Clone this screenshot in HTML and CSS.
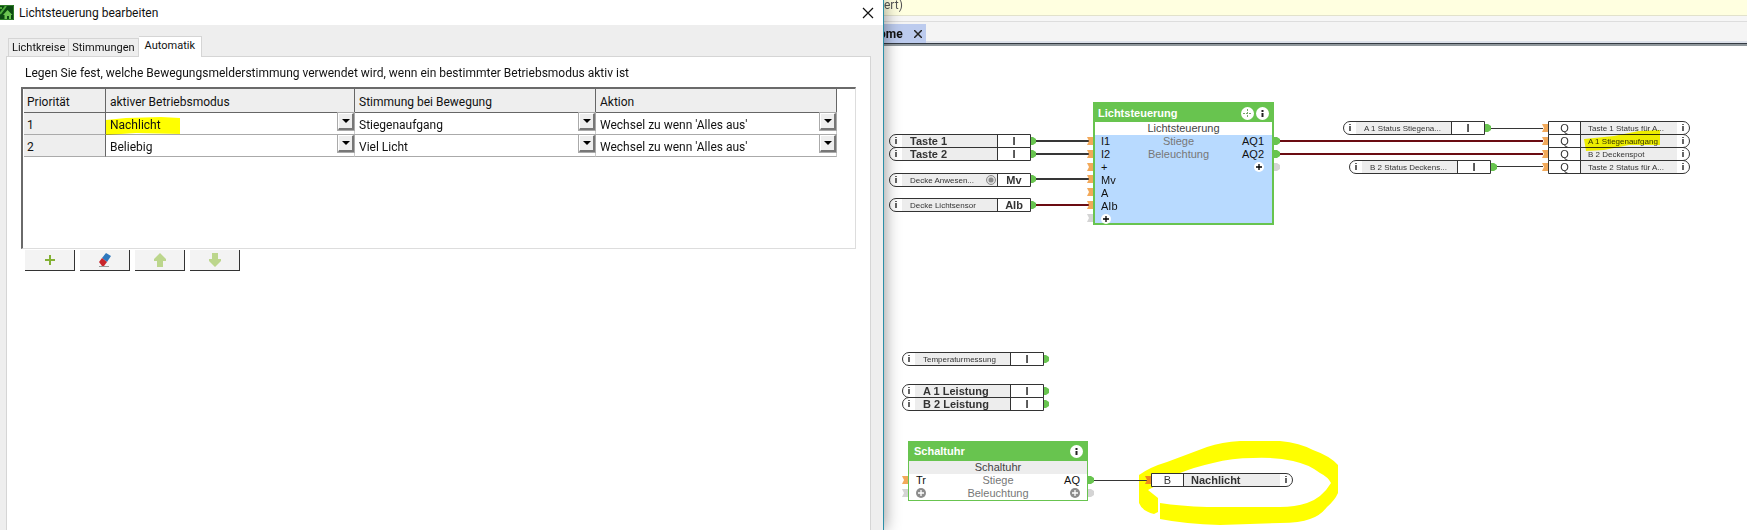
FILE: index.html
```html
<!doctype html>
<html lang="de">
<head>
	<meta charset="utf-8">
	<title>Lichtsteuerung bearbeiten</title>
	<link rel="stylesheet" href="styles.css">
</head>
<body>
<div id="desktop">

	<div id="dialog">
		<div class="titlebar">
			<svg class="appicon" width="14" height="15" viewBox="0 0 14 15">
				<rect width="14" height="15" fill="#0c4a12"/>
				<path d="M0 9L6 1M0 3h2" stroke="#4fae3c" stroke-width="2" fill="none"/>
				<path d="M3 10l4.500-5 5 5h-1.500v4H9v-3H7v3H4.500v-4z" fill="#6cc551"/>
				<path d="M0 .5h13.500v14H0" stroke="#2f7d28" fill="none"/>
			</svg>
			<h1>Lichtsteuerung bearbeiten</h1>
			<button type="button" class="close" aria-label="Schließen">
				<svg width="12" height="12" viewBox="0 0 12 12"><path d="M1 1l10 10M11 1L1 11" stroke="#111" stroke-width="1.200"/></svg>
			</button>
		</div>

		<div class="tabs">
			<button type="button">Lichtkreise</button>
			<button type="button">Stimmungen</button>
			<button type="button" class="active">Automatik</button>
		</div>

		<div class="panel">
			<p>Legen Sie fest, welche Bewegungsmelderstimmung verwendet wird, wenn ein bestimmter Betriebsmodus aktiv ist</p>
			<div class="listbox">
				<table>
					<colgroup><col class="c-prio"><col class="c-modus"><col class="c-stimmung"><col class="c-aktion"></colgroup>
					<thead>
						<tr><th>Priorität</th><th>aktiver Betriebsmodus</th><th>Stimmung bei Bewegung</th><th>Aktion</th></tr>
					</thead>
					<tbody>
						<tr>
							<td class="prio">1</td>
							<td><svg class="marker" width="75" height="18" viewBox="0 0 75 18"><path d="M0 3L20 1 55 0 74 1V17L30 16 0 18z"/></svg><select aria-label="Betriebsmodus 1"><option>Nachlicht</option></select><span class="arrow"></span></td>
							<td><select aria-label="Stimmung 1"><option>Stiegenaufgang</option></select><span class="arrow"></span></td>
							<td><select aria-label="Aktion 1"><option>Wechsel zu wenn 'Alles aus'</option></select><span class="arrow"></span></td>
						</tr>
						<tr>
							<td class="prio">2</td>
							<td><select aria-label="Betriebsmodus 2"><option>Beliebig</option></select><span class="arrow"></span></td>
							<td><select aria-label="Stimmung 2"><option>Viel Licht</option></select><span class="arrow"></span></td>
							<td><select aria-label="Aktion 2"><option>Wechsel zu wenn 'Alles aus'</option></select><span class="arrow"></span></td>
						</tr>
					</tbody>
				</table>
			</div>
			<div class="tools">
				<button type="button" aria-label="Hinzufügen"><svg width="14" height="14" viewBox="0 0 14 14"><path d="M7 2v10M2 7h10" stroke="#84b135" stroke-width="2"/></svg></button>
				<button type="button" aria-label="Löschen"><svg width="14" height="14" viewBox="0 0 14 14"><path d="M8 0l5 3-4 6-5-4z" fill="#2f78bd"/><path d="M4 5l5 4-3 4H4L1 9z" fill="#c8262c"/><path d="M1 13.500h10" stroke="#999"/></svg></button>
				<button type="button" aria-label="Nach oben"><svg width="14" height="14" viewBox="0 0 14 14"><path d="M7 0l6 6v2h-3v6H4V8H1V6z" fill="#bcd68c"/></svg></button>
				<button type="button" aria-label="Nach unten"><svg width="14" height="14" viewBox="0 0 14 14"><path d="M7 14l6-6V6h-3V0H4v6H1v2z" fill="#bcd68c"/></svg></button>
			</div>
		</div>
	</div>

	<div id="config">
		<div class="notice">ert)</div>
		<div class="pagebar">
			<div class="pagetab">
				<span>ome</span>
				<button type="button" aria-label="Seite schließen"><svg width="8" height="8" viewBox="0 0 8 8"><path d="M0 0l8 8M8 0L0 8" stroke="#222" stroke-width="1.500"/></svg></button>
			</div>
		</div>

		<div id="canvas">
			<!-- wires and ports -->
			<svg class="wires" width="863" height="484" viewBox="884 46 863 484">
				<defs>
					<path id="in" d="M-6-4H0V4H-6L-4 0z"/>
					<path id="out" d="M0-4H3L6-2V2L3 4H0z"/>
				</defs>
				<path fill="#ff0" d="M1139 475Q1150 467 1167 462L1207 447Q1222 442 1240 441H1280Q1300 443 1313 450 1330 456 1338 465V493Q1335 500 1327 507 1320 516 1310 519 1300 523 1280 523L1220 525Q1185 524 1160 519V503Q1180 506 1207 507H1280Q1295 507 1307 503 1322 498 1331 483 1328 477 1320 473 1308 464 1293 461 1275 457 1253 458 1232 458 1213 463 1195 467 1180 473L1148 490 1158 498V512L1154 514Q1142 511 1139 503z"/>
				<g stroke="#363636" stroke-width="2">
					<path d="M1036 141H1090M1036 154H1090M1036 179H1090"/>
					<path d="M1036 205H1090M1280 141H1543M1280 154H1543" stroke="#6b0c12"/>
					<path d="M1490 128.500H1543M1496 166.500H1543M1094 480.500H1147" stroke-width="1"/>
				</g>
				<g fill="#f2a95a">
					<use href="#in" x="1093" y="141"/><use href="#in" x="1093" y="154"/><use href="#in" x="1093" y="167"/>
					<use href="#in" x="1093" y="179"/><use href="#in" x="1093" y="192"/><use href="#in" x="1093" y="205"/>
					<use href="#in" x="1548" y="128"/><use href="#in" x="1548" y="141"/><use href="#in" x="1548" y="154"/><use href="#in" x="1548" y="167"/>
					<use href="#in" x="908" y="480"/><use href="#in" x="1151" y="480" fill="#f08a1c"/>
				</g>
				<g fill="#68c44f">
					<use href="#out" x="1030" y="141"/><use href="#out" x="1030" y="154"/><use href="#out" x="1030" y="179"/><use href="#out" x="1030" y="205"/>
					<use href="#out" x="1274" y="141"/><use href="#out" x="1274" y="154"/>
					<use href="#out" x="1485" y="128"/><use href="#out" x="1491" y="167"/>
					<use href="#out" x="1043" y="359"/><use href="#out" x="1043" y="391"/><use href="#out" x="1043" y="404"/>
					<use href="#out" x="1088" y="480"/>
				</g>
				<g fill="#d4d4d4">
					<use href="#in" x="1093" y="218"/><use href="#out" x="1274" y="167"/>
					<use href="#in" x="908" y="493"/><use href="#out" x="1088" y="493"/>
				</g>
			</svg>

			<div class="node taste1"><i>i</i><b>Taste 1</b><em>I</em></div>
			<div class="node taste2"><i>i</i><b>Taste 2</b><em>I</em></div>
			<div class="node small anwesen"><i>i</i><b>Decke Anwesen...</b><svg width="12" height="12" viewBox="0 0 12 12"><circle cx="6" cy="6" r="4.500" fill="#ddd" stroke="#8a8a8a"/><circle cx="6" cy="6" r="2.500" fill="#8a8a8a"/></svg><em>Mv</em></div>
			<div class="node small lichtsensor"><i>i</i><b>Decke Lichtsensor</b><em>AIb</em></div>

			<div class="node small status-a1"><i>i</i><b>A 1 Status Stiegena...</b><em>I</em></div>
			<div class="node small status-b2"><i>i</i><b>B 2 Status Deckens...</b><em>I</em></div>

			<div class="node output small q1"><em>Q</em><b>Taste 1 Status für A...</b><i>i</i></div>
			<div class="node output small q2"><em>Q</em><b>A 1 Stiegenaufgang</b><i>i</i></div>
			<div class="node output small q3"><em>Q</em><b>B 2 Deckenspot</b><i>i</i></div>
			<div class="node output small q4"><em>Q</em><b>Taste 2 Status für A...</b><i>i</i></div>
			<svg class="marker mark-q" width="77" height="21" viewBox="0 0 77 21"><path d="M0 9L30 6 55 1 76 0V15H45L20 20 2 21z"/></svg>

			<div class="node small temperatur"><i>i</i><b>Temperaturmessung</b><em>I</em></div>
			<div class="node leistung-a1"><i>i</i><b>A 1 Leistung</b><em>I</em></div>
			<div class="node leistung-b2"><i>i</i><b>B 2 Leistung</b><em>I</em></div>
			<div class="node output nachlicht"><em>B</em><b>Nachlicht</b><i>i</i></div>

			<div class="block licht">
				<h2>Lichtsteuerung
					<svg width="28" height="13" viewBox="0 0 28 13"><circle cx="6.500" cy="6.500" r="6.500" fill="#fff"/><circle cx="21.500" cy="6.500" r="6.500" fill="#fff"/><path d="M6.500 2v9M2 6.500h9" stroke="#77a86b" stroke-dasharray="2 1"/><path d="M20.500 3h2v2h-2zM20.500 6h2v4h-2z" fill="#222"/></svg>
				</h2>
				<div class="name">Lichtsteuerung</div>
				<div class="ports">
					<div class="row"><span>I1</span><span>Stiege</span><span>AQ1</span></div>
					<div class="row"><span>I2</span><span>Beleuchtung</span><span>AQ2</span></div>
					<div class="row"><span>+</span><span></span><span><svg class="plus"><use href="#plus"/></svg></span></div>
					<div class="row"><span>Mv</span></div>
					<div class="row"><span>A</span></div>
					<div class="row"><span>AIb</span></div>
					<div class="row"><span><svg class="plus"><use href="#plus"/></svg></span></div>
				</div>
			</div>

			<div class="block uhr">
				<h2>Schaltuhr
					<svg width="13" height="13" viewBox="0 0 13 13"><circle cx="6.500" cy="6.500" r="6.500" fill="#fff"/><path d="M5.500 3h2v2h-2zM5.500 6h2v4h-2z" fill="#222"/></svg>
				</h2>
				<div class="name">Schaltuhr</div>
				<div class="ports">
					<div class="row"><span>Tr</span><span>Stiege</span><span>AQ</span></div>
					<div class="row"><span><svg class="plus"><use href="#plus"/></svg></span><span>Beleuchtung</span><span><svg class="plus"><use href="#plus"/></svg></span></div>
				</div>
			</div>
		</div>
	</div>
</div>

<svg width="0" height="0" class="sprites">
	<symbol id="plus" viewBox="0 0 10 10"><circle cx="5" cy="5" r="5"/><path d="M5 2v6M2 5h6" stroke="currentColor" stroke-width="1.300"/></symbol>
</svg>
</body>
</html>
```
FILE: styles.css
```css
html, body {
	margin: 0;
	padding: 0;
	height: 100%;
}

body {
	font: 12px/16px Roboto, "Open Sans", sans-serif;
	color: #111;
	background: #fff;
	overflow: hidden;
}

button, select {
	font: inherit;
	color: inherit;
	margin: 0;
	padding: 0;
	border: none;
	background: none;
	border-radius: 0;
}

svg {
	display: block;
}

.sprites {
	position: absolute;
}

#desktop {
	display: grid;
	grid-template-columns: minmax(0, 884fr) minmax(0, 863fr);
	min-height: 100%;
}

/************** Dialog ******************/
#dialog {
	display: flex;
	flex-direction: column;
	background: #eee;
	border-right: 1px solid #2c8fa8;
	box-shadow: 0 0 16px rgba(0, 0, 0, 0.45);
	z-index: 2;
}

.titlebar {
	display: flex;
	align-items: center;
	height: 25px;
	padding-right: 9px;
	background: #fff;
}

.titlebar h1 {
	flex: 1;
	margin: 0 0 0 5px;
	font-size: 12px;
	font-weight: normal;
}

.tabs {
	display: flex;
	align-items: flex-end;
	height: 31px;
	padding-left: 8px;
}

.tabs button {
	height: 18px;
	padding: 0 3px;
	border: 1px solid #d5d5d5;
	border-bottom: none;
	border-left-width: 0;
	font-size: 11px;
	line-height: 18px;
}

.tabs button:first-child {
	border-left-width: 1px;
}

.tabs .active {
	height: 21px;
	padding: 0 6px 2px;
	margin-bottom: -1px;
	background: #fff;
	z-index: 1;
}

.panel {
	flex: 1;
	margin: 0 12px 0 6px;
	padding: 8px 14px;
	border: 1px solid #d5d5d5;
	border-bottom: none;
	background: #fff;
}

.panel p {
	margin: 0 4px 6px;
	white-space: nowrap;
}

.listbox {
	height: 159px;
	padding-left: 1px;
	border: 1px solid #ddd;
	border-top: 2px solid #6a6a6a;
	border-left: 2px solid #6a6a6a;
}

table {
	width: 813px;
	table-layout: fixed;
	border-collapse: separate;
	border-spacing: 0;
}

.c-prio { width: 82px; }
.c-modus { width: 249px; }
.c-stimmung { width: 241px; }
.c-aktion { width: 241px; }

th, td {
	box-sizing: border-box;
	position: relative;
	padding: 0;
	height: 22px;
	text-align: left;
	font-weight: normal;
	border-right: 1px solid #ccc;
	border-bottom: 1px solid #aaa;
}

th {
	height: 24px;
	padding: 2px 4px 0;
	background: #eee;
	border-right-color: #666;
	border-bottom-color: #666;
}

th:first-child, .prio {
	padding-left: 3px;
}

.prio {
	padding-top: 2px;
	background: #eee;
	border-right-color: #666;
}

td select {
	display: block;
	position: relative;
	width: 100%;
	height: 21px;
	padding: 3px 20px 0 4px;
	appearance: none;
}

.arrow {
	position: absolute;
	top: 0;
	right: 0;
	box-sizing: border-box;
	width: 16px;
	height: 17px;
	background: #eee;
	border: 1px solid #fff;
	border-right: 2px solid #777;
	border-bottom: 2px solid #777;
	outline: 1px solid #aaa;
	pointer-events: none;
}

.arrow:after {
	content: "";
	position: absolute;
	left: 3px;
	top: 5px;
	border: 4px solid transparent;
	border-top-color: #000;
	border-bottom: none;
}

.marker {
	position: absolute;
	left: 0;
	top: 4px;
	fill: #ff0;
	mix-blend-mode: multiply;
}

.tools {
	display: flex;
	gap: 5px;
	margin: 1px 4px 0;
}

.tools button {
	display: flex;
	align-items: center;
	justify-content: center;
	width: 50px;
	height: 21px;
	background: #f3f3f3;
	border-right: 1px solid #333;
	border-bottom: 1px solid #333;
}

/************** Config window ******************/
.notice {
	height: 15px;
	line-height: 10px;
	background: #ffffe0;
	border-bottom: 1px solid #e2e2cc;
	color: #555;
}

.pagebar {
	height: 27px;
	background: linear-gradient(#f6f6f6 5px, #ddd 5px, #ddd 6px, #f4f4f4 6px, #f4f4f4 25px, #dde1ea 25px);
	border-bottom: 1px solid #333a42;
	box-shadow: 0 2px #8f979c;
}

.pagetab {
	display: flex;
	align-items: center;
	justify-content: space-between;
	box-sizing: border-box;
	width: 42px;
	height: 27px;
	padding: 8px 4px 0 0;
	background: linear-gradient(transparent 8px, #bccbee 8px);
	font-weight: bold;
}

.pagetab span {
	margin-left: -5px;
}

#canvas {
	position: relative;
	height: 484px;
	margin-top: 2px;
	font-family: "Liberation Sans", Arial, sans-serif;
	font-size: 11px;
	line-height: 13px;
}

.wires {
	position: absolute;
	left: 0;
	top: 0;
}

.node {
	position: absolute;
	box-sizing: border-box;
	display: flex;
	width: 142px;
	height: 14px;
	border: 1px solid #333;
	border-radius: 8px 0 0 8px;
	background: #fff;
	overflow: hidden;
	line-height: 13px;
	white-space: nowrap;
	color: #333;
}

.node.output {
	border-radius: 0 8px 8px 0;
}

.node i {
	width: 12px;
	font: bold 9px/12px "Liberation Sans", Arial, sans-serif;
	text-align: center;
	color: #000;
}

.node b {
	flex: 1;
	padding-left: 8px;
	background: #ededed;
}

.node em {
	width: 32px;
	border-left: 1px solid #333;
	font-style: normal;
	font-weight: bold;
	text-align: center;
}

.node.output b {
	padding-left: 7px;
}

.node.output em {
	width: 31px;
	border-left: none;
	border-right: 1px solid #333;
	font-weight: normal;
}

.node.small b {
	font-size: 8px;
	font-weight: normal;
}

.node svg {
	background: #ededed;
}

/* positions on the canvas */
.taste1 { left: 5px; top: 88px; }
.taste2 { left: 5px; top: 101px; }
.anwesen { left: 5px; top: 127px; }
.lichtsensor { left: 5px; top: 152px; }
.status-a1 { left: 459px; top: 75px; }
.status-b2 { left: 465px; top: 114px; }
.q1 { left: 664px; top: 75px; }
.q2 { left: 664px; top: 88px; }
.q3 { left: 664px; top: 101px; }
.q4 { left: 664px; top: 114px; }
.mark-q { left: 700px; top: 84px; }
.temperatur { left: 18px; top: 306px; }
.leistung-a1 { left: 18px; top: 338px; }
.leistung-b2 { left: 18px; top: 351px; }
.nachlicht { left: 267px; top: 427px; }
.licht { left: 209px; top: 56px; }
.uhr { left: 24px; top: 395px; }

.block {
	position: absolute;
	box-sizing: border-box;
	width: 181px;
	border: 2px solid #68c44f;
	background: #fff;
}

.block h2 {
	display: flex;
	align-items: center;
	justify-content: space-between;
	margin: 0;
	height: 18px;
	padding: 0 3px;
	font-size: 11px;
	background: #68c44f;
	color: #fff;
}

.block .name {
	height: 13px;
	text-align: center;
	color: #444;
}

.ports {
	color: #111;
}

.row {
	display: grid;
	grid-template-columns: 34px 1fr 34px;
	height: 13px;
	padding: 0 6px;
}

.row span:nth-child(2) {
	text-align: center;
	color: #777;
}

.row span:nth-child(3) {
	text-align: right;
}

.plus {
	display: inline-block;
	width: 10px;
	height: 10px;
	margin-top: 1px;
	vertical-align: top;
	fill: #fff;
	color: #000;
}

.licht .row {
	grid-template-columns: 28px 1fr 36px;
	padding-right: 8px;
}

.licht .ports {
	height: 88px;
	background: #b8daff;
}

.uhr {
	width: 180px;
	border-width: 1px;
}

.uhr h2 {
	height: 19px;
	padding: 0 4px 0 5px;
}

.uhr .name {
	background: #ededed;
}

.uhr .row {
	padding: 0 7px;
}

.uhr .plus {
	fill: #8c8c8c;
	color: #fff;
}
```
